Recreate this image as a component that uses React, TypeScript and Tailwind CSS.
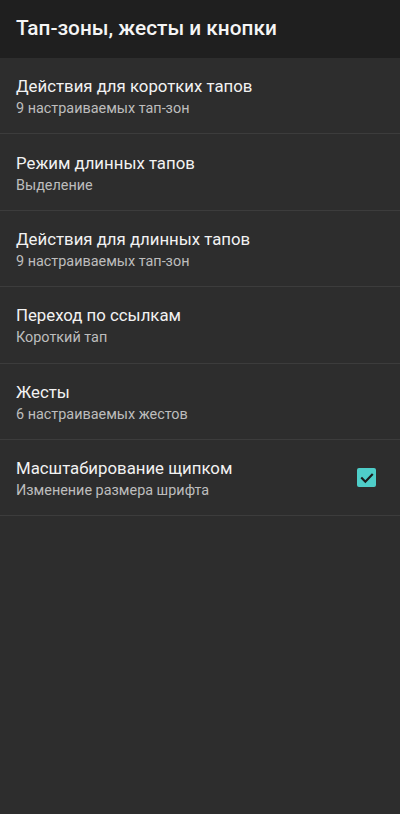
const rows = [
  { title: 'Действия для коротких тапов', sub: '9 настраиваемых тап-зон' },
  { title: 'Режим длинных тапов', sub: 'Выделение' },
  { title: 'Действия для длинных тапов', sub: '9 настраиваемых тап-зон' },
  { title: 'Переход по ссылкам', sub: 'Короткий тап' },
  { title: 'Жесты', sub: '6 настраиваемых жестов' },
  { title: 'Масштабирование щипком', sub: 'Изменение размера шрифта', checked: true },
]

export default function App() {
  return (
    <div className="w-[400px] h-[814px] bg-[#2d2d2d] font-['Roboto',sans-serif] flex flex-col">
      <div className="h-[58px] bg-[#1f1f1f] flex items-center px-4 shrink-0">
        <h1 className="text-[20.8px] font-medium text-[#f5f5f5]">Тап-зоны, жесты и кнопки</h1>
      </div>
      {rows.map(r => (
        <div key={r.title} className="h-[76.4px] border-b border-[#3c3c3c] flex items-center pl-4 pr-6 shrink-0">
          <div className="flex-1 flex flex-col pt-[4px]">
            <span className="text-[16.8px] leading-[22px] text-[#f2f2f2]">{r.title}</span>
            <span className="text-[14.4px] leading-[22px] mt-[1px] text-[#bdbdbd]">{r.sub}</span>
          </div>
          {r.checked && (
            <div className="w-[19px] h-[19px] rounded-[2px] bg-[#4ecdc8] flex items-center justify-center">
              <svg width="16" height="16" viewBox="0 0 24 24" fill="none" stroke="#1b1b1b" strokeWidth="3.2" strokeLinecap="square">
                <path d="M4.5 12.5l5 5L19.5 7" />
              </svg>
            </div>
          )}
        </div>
      ))}
    </div>
  )
}
